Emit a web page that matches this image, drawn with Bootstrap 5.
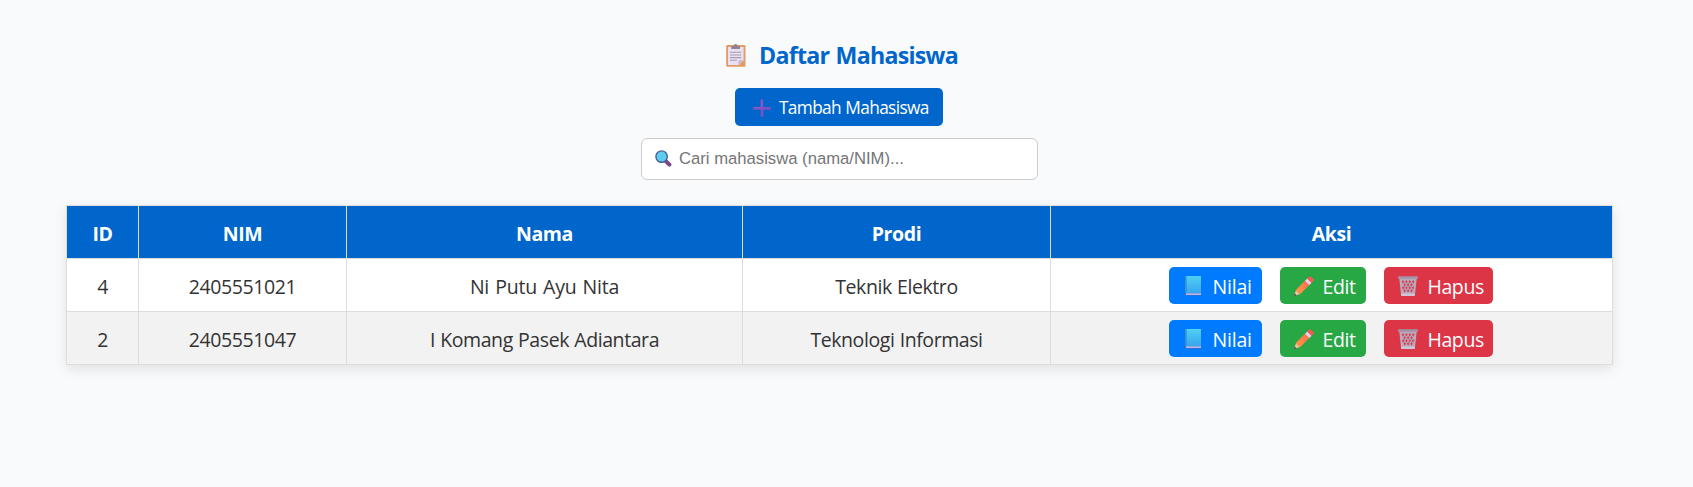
<!DOCTYPE html>
<html lang="id">
<head>
<meta charset="utf-8">
<meta name="viewport" content="width=device-width, initial-scale=1">
<title>Daftar Mahasiswa</title>
<link href="https://cdn.jsdelivr.net/npm/bootstrap@5.3.0/dist/css/bootstrap.min.css" rel="stylesheet">
<style>
  body { background: #f8fafc; color: #333; font-family: "Open Sans", "Noto Sans", sans-serif; font-size: 19.5px; line-height: 27px; }
  svg { display: block; flex: none; }
  .page { padding: 38px 80px 40px 66px; }
  .page-title { color: #06c; font-size: 23.2px; line-height: 34px; font-weight: 700; letter-spacing: -.75px; word-spacing: 1px; gap: 13px; margin: 0 0 16px 5px; }
  .btn-add { background: #06c; color: #fff; width: 208px; height: 38px; border-radius: 5px; padding: 1px 0 0 18px; gap: 8px; font-size: 17.3px; letter-spacing: -.65px; word-spacing: .5px; border: 0; margin: 0 1px 12px 0; }
  .btn-add:hover { background: #0052a3; color: #fff; }
  .search-box { width: 397px; height: 42px; background: #fff; border: 1px solid #ccc; border-radius: 6px; padding: 0 12px 0 13px; gap: 7px; margin: 0 0 25px; }
  .search-box svg { margin-top: -2px; }
  .search-box input { font: 16.67px/24px "Liberation Sans", Arial, sans-serif; height: 36px; padding: 0; color: #333; }
  .search-box input::placeholder { color: #757575; opacity: 1; }
  .table-wrap { width: 1547px; height: 160px; box-shadow: 0 4px 12px rgba(0,0,0,.1); }
  .student-table { table-layout: fixed; width: 1547px; border-collapse: collapse; background: #fff; }
  .student-table th, .student-table td { border: 1px solid #ddd; height: 53px; padding: 2px 0 0; text-align: center; vertical-align: middle; }
  .student-table th { background: #06c; color: #fff; font-weight: 700; letter-spacing: -.4px; }
  .student-table td { letter-spacing: -.42px; word-spacing: .6px; }
  .student-table td.airy { letter-spacing: -.2px; word-spacing: 1.2px; }
  .student-table td:last-child { padding: 0 2px 0 0; }
  .student-table tbody tr:nth-child(even) { background: #f2f2f2; }
  .c-id { width: 72px; } .c-nim { width: 208px; } .c-nama { width: 396px; } .c-prodi { width: 308px; } .c-aksi { width: 562px; }
  .actions { gap: 18px; }
  .act { height: 37px; border: 0; border-radius: 5px; color: #fff; font-size: 19.5px; line-height: 27px; letter-spacing: -.42px; padding: 2px 0 0 14px; gap: 10px; }
  .act svg { margin-top: -1px; }
  .act:hover { color: #fff; filter: brightness(.93); }
  .act-nilai { background: #007bff; width: 93px; letter-spacing: -.2px; }
  .act-edit { background: #28a745; width: 86px; gap: 9px; }
  .act-hapus { background: #dc3545; width: 109px; }
</style>
</head>
<body>
<svg class="position-absolute" width="0" height="0" aria-hidden="true">
  <defs>
    <linearGradient id="gBook" x1="0" y1="0" x2="0" y2="1"><stop offset="0" stop-color="#50d0f3"/><stop offset="1" stop-color="#38a5ee"/></linearGradient>
    <linearGradient id="gPencil" x1="1" y1="0" x2="0" y2="1"><stop offset="0" stop-color="#ff6a50"/><stop offset="1" stop-color="#ff9a46"/></linearGradient>
  </defs>
  <symbol id="i-book" viewBox="0 0 20 20">
    <path d="M2 1.5Q2 0 3.5 0H18v19.5H3.5Q2 19.5 2 18z" fill="#4b67b5"/>
    <path d="M3 17.5H18v1.2H3z" fill="#e8dcf5"/>
    <path d="M2 1.5Q2 0 3.5 0H18v17H2z" fill="url(#gBook)"/>
    <path d="M2 1.5Q2 0 3.7 0V17H2z" fill="#3691d0"/>
  </symbol>
  <symbol id="i-pencil" viewBox="0 0 20 20">
    <path d="M0 20 2 14 6 18z" fill="#efc2a0"/>
    <path d="M0 20 .8 17.5 2.6 19.2z" fill="#4a3a48"/>
    <path d="M1.8 14 11.5 4.3 15.8 8.6 6 18.2z" fill="url(#gPencil)"/>
    <path d="M11 4.8 13.4 2.4 17.7 6.7 15.3 9.1z" fill="#e3d4e8"/>
    <path d="M13.2 2.6 15 .8Q16 0 17 .8L19.3 3Q20.2 4 19.3 5L17.5 6.9z" fill="#fa5757"/>
  </symbol>
  <symbol id="i-trash" viewBox="0 0 20 20">
    <path d="M1.2 2 3.2 20H16.8L18.8 2z" fill="#b9a9bb"/>
    <g fill="#d43b50"><path d="M5 4l1.2 1.7L5 7.4 3.8 5.7zM8.4 4l1.2 1.7-1.2 1.7-1.2-1.7zM11.8 4 13 5.7l-1.2 1.7-1.2-1.7zM15.2 4l1.2 1.7-1.2 1.7L14 5.7zM6.7 7l1.2 1.7-1.2 1.7-1.2-1.7zM10.1 7l1.2 1.7-1.2 1.7-1.2-1.7zM13.5 7l1.2 1.7-1.2 1.7-1.2-1.7zM5.2 10l1.2 1.7-1.2 1.7L4 11.7zM8.4 10l1.2 1.7-1.2 1.7-1.2-1.7zM11.8 10l1.2 1.7-1.2 1.7-1.2-1.7zM15 10l1.1 1.7-1.1 1.7-1.2-1.7zM6.7 13l1.2 1.7-1.2 1.7-1.2-1.7zM10.1 13l1.2 1.7-1.2 1.7-1.2-1.7zM13.5 13l1.2 1.7-1.2 1.7-1.2-1.7z"/></g>
    <rect x="0" y=".3" width="20" height="2.4" rx="1" fill="#a294a8"/>
    <path d="M3.1 17.6H16.9L16.6 20H3.4z" fill="#d0c4d6"/>
  </symbol>
</svg>

<main class="page d-flex flex-column align-items-center">
  <h2 class="page-title d-flex align-items-center">
    <svg width="20" height="23" viewBox="0 0 20 23"><rect x=".2" y="1" width="19.3" height="21.8" rx="1.2" fill="#e29b62"/><path d="M2 3H17.6V16.5L12.8 21H2z" fill="#e9e1f2"/><path d="M17.6 16.2 12.6 21V17.3Q12.6 16.2 13.7 16.2z" fill="#c5b3d6"/><path d="M4 8.3H15.3M4 11H15.3M4 13.6H15.3M4 16.2H11" stroke="#a79cb0" stroke-width="1.1"/><path d="M5.3 3.2Q5.3 2 6.5 2H7.5Q8 0 9.6 0T11.8 2H13Q14 2 14 3.2V5H5.3z" fill="#8e8293"/></svg>
    <span>Daftar Mahasiswa</span>
  </h2>
  <a class="btn btn-add d-flex align-items-center" href="#">
    <svg width="18" height="18" viewBox="0 0 18 18"><path d="M9 1.2V16.8M1.2 9.4H16.8" stroke="#7d50c4" stroke-width="2.6" stroke-linecap="round"/><path d="M8.4 1.5V8.5M1.5 8.8H8" stroke="#9660c0" stroke-width="1"/></svg>
    <span>Tambah Mahasiswa</span>
  </a>
  <div class="search-box d-flex align-items-center">
    <svg width="17" height="17" viewBox="0 0 17 17"><path d="M10.5 10.8 14.4 14.6" stroke="#7c4686" stroke-width="4" stroke-linecap="round"/><circle cx="6.6" cy="6.6" r="5.7" fill="#5fcbee" stroke="#465f98" stroke-width="1.4"/></svg>
    <input class="form-control border-0 shadow-none bg-transparent" type="text" placeholder="Cari mahasiswa (nama/NIM)...">
  </div>
  <div class="table-wrap">
  <table class="student-table">
    <colgroup><col class="c-id"><col class="c-nim"><col class="c-nama"><col class="c-prodi"><col class="c-aksi"></colgroup>
    <thead><tr><th>ID</th><th>NIM</th><th>Nama</th><th>Prodi</th><th>Aksi</th></tr></thead>
    <tbody>
      <tr><td>4</td><td>2405551021</td><td class="airy">Ni Putu Ayu Nita</td><td>Teknik Elektro</td>
        <td><div class="actions d-flex justify-content-center">
          <a class="btn act act-nilai d-flex align-items-center" href="#"><svg width="20" height="20"><use href="#i-book"/></svg><span>Nilai</span></a>
          <a class="btn act act-edit d-flex align-items-center" href="#"><svg width="20" height="20"><use href="#i-pencil"/></svg><span>Edit</span></a>
          <a class="btn act act-hapus d-flex align-items-center" href="#"><svg width="20" height="20"><use href="#i-trash"/></svg><span>Hapus</span></a>
        </div></td></tr>
      <tr><td>2</td><td>2405551047</td><td>I Komang Pasek Adiantara</td><td>Teknologi Informasi</td>
        <td><div class="actions d-flex justify-content-center">
          <a class="btn act act-nilai d-flex align-items-center" href="#"><svg width="20" height="20"><use href="#i-book"/></svg><span>Nilai</span></a>
          <a class="btn act act-edit d-flex align-items-center" href="#"><svg width="20" height="20"><use href="#i-pencil"/></svg><span>Edit</span></a>
          <a class="btn act act-hapus d-flex align-items-center" href="#"><svg width="20" height="20"><use href="#i-trash"/></svg><span>Hapus</span></a>
        </div></td></tr>
    </tbody>
  </table>
  </div>
</main>
<script src="https://cdn.jsdelivr.net/npm/bootstrap@5.3.0/dist/js/bootstrap.bundle.min.js"></script>
</body>
</html>
